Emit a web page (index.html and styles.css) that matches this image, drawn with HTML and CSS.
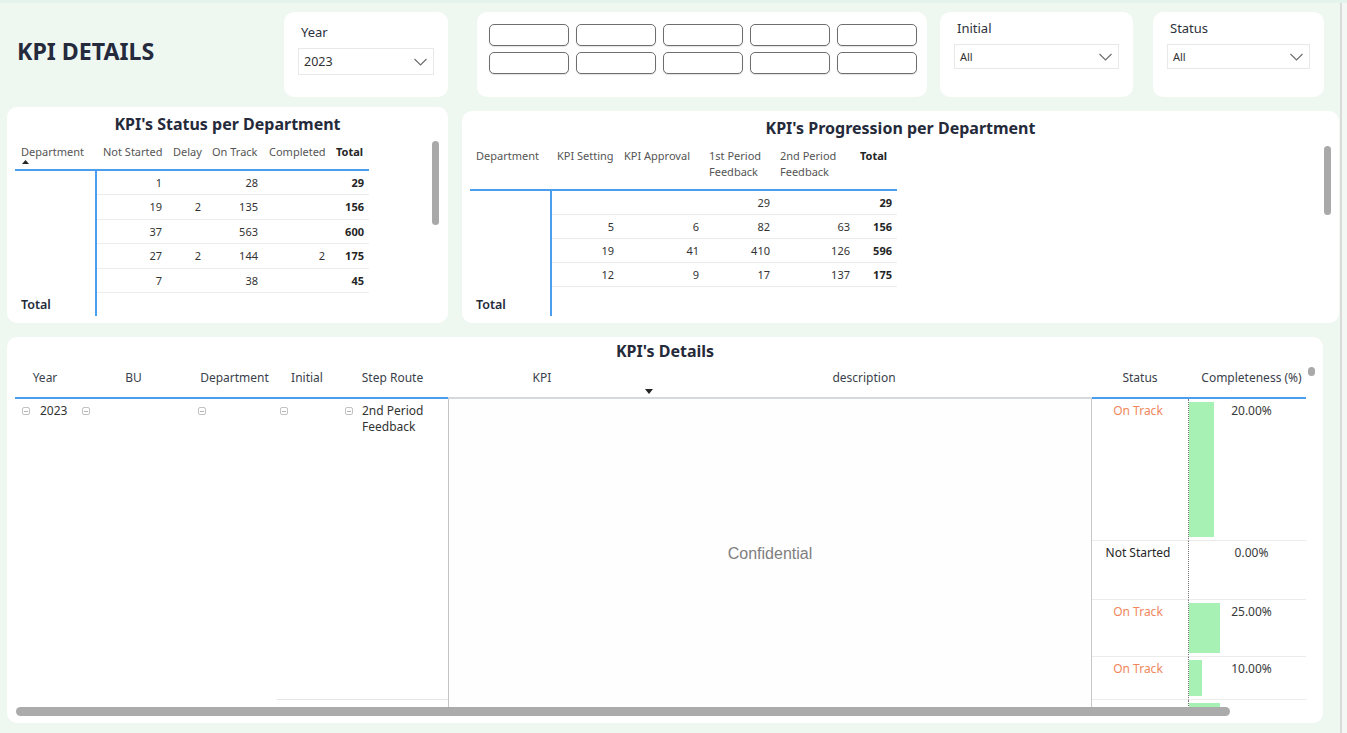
FILE: index.html
```html
<!DOCTYPE html>
<html lang="en">
<head>
<meta charset="utf-8">
<title>KPI Details</title>
<link rel="stylesheet" href="styles.css">
</head>
<body>
<div class="page">
  <main class="main">
    <header class="top">
      <h1 class="page-title">KPI DETAILS</h1>

      <section class="card slicer slicer-year">
        <div class="slicer-label">Year</div>
        <div class="dropdown dd-year">
          <span>2023</span>
          <svg class="chev" width="13" height="8" viewBox="0 0 13 8"><polyline points="0.5,1 6.5,7 12.5,1"/></svg>
        </div>
      </section>

      <section class="card btn-card">
        <div class="btn-grid">
          <button class="pill"></button><button class="pill"></button><button class="pill"></button><button class="pill"></button><button class="pill"></button>
          <button class="pill"></button><button class="pill"></button><button class="pill"></button><button class="pill"></button><button class="pill"></button>
        </div>
      </section>

      <section class="card slicer slicer-initial">
        <div class="slicer-label">Initial</div>
        <div class="dropdown dd-small dd-initial">
          <span>All</span>
          <svg class="chev" width="13" height="8" viewBox="0 0 13 8"><polyline points="0.5,1 6.5,7 12.5,1"/></svg>
        </div>
      </section>

      <section class="card slicer slicer-status">
        <div class="slicer-label">Status</div>
        <div class="dropdown dd-small dd-status">
          <span>All</span>
          <svg class="chev" width="13" height="8" viewBox="0 0 13 8"><polyline points="0.5,1 6.5,7 12.5,1"/></svg>
        </div>
      </section>
    </header>

    <div class="mid">
      <section class="card visual status-card">
        <h2 class="visual-title">KPI's Status per Department</h2>
        <div class="mx mx-status">
          <div class="hc hc-dept">Department<svg class="sort-up" width="7" height="4" viewBox="0 0 7 4"><path d="M0 4 L3.5 0 L7 4 Z"/></svg></div>
          <div class="hc">Not Started</div>
          <div class="hc">Delay</div>
          <div class="hc">On Track</div>
          <div class="hc">Completed</div>
          <div class="hc bold">Total</div>

          <div class="dc"></div><div class="nc">1</div><div class="nc"></div><div class="nc">28</div><div class="nc"></div><div class="nc bold">29</div>
          <div class="dc"></div><div class="nc">19</div><div class="nc">2</div><div class="nc">135</div><div class="nc"></div><div class="nc bold">156</div>
          <div class="dc"></div><div class="nc">37</div><div class="nc"></div><div class="nc">563</div><div class="nc"></div><div class="nc bold">600</div>
          <div class="dc"></div><div class="nc">27</div><div class="nc">2</div><div class="nc">144</div><div class="nc">2</div><div class="nc bold">175</div>
          <div class="dc"></div><div class="nc">7</div><div class="nc"></div><div class="nc">38</div><div class="nc"></div><div class="nc bold">45</div>

          <div class="tl">Total</div><div></div><div></div><div></div><div></div><div></div>
        </div>
        <div class="vscroll vs-status"></div>
      </section>

      <section class="card visual prog-card">
        <h2 class="visual-title">KPI's Progression per Department</h2>
        <div class="mx mx-prog">
          <div class="hc hc-dept">Department</div>
          <div class="hc">KPI Setting</div>
          <div class="hc">KPI Approval</div>
          <div class="hc">1st Period<br>Feedback</div>
          <div class="hc">2nd Period<br>Feedback</div>
          <div class="hc bold">Total</div>

          <div class="dc"></div><div class="nc"></div><div class="nc"></div><div class="nc">29</div><div class="nc"></div><div class="nc bold">29</div>
          <div class="dc"></div><div class="nc">5</div><div class="nc">6</div><div class="nc">82</div><div class="nc">63</div><div class="nc bold">156</div>
          <div class="dc"></div><div class="nc">19</div><div class="nc">41</div><div class="nc">410</div><div class="nc">126</div><div class="nc bold">596</div>
          <div class="dc"></div><div class="nc">12</div><div class="nc">9</div><div class="nc">17</div><div class="nc">137</div><div class="nc bold">175</div>

          <div class="tl tl-prog">Total</div><div></div><div></div><div></div><div></div><div></div>
        </div>
        <div class="vscroll vs-prog"></div>
      </section>
    </div>

    <section class="card details">
      <h2 class="visual-title">KPI's Details</h2>
      <div class="dt-head">
        <div class="dh">Year</div>
        <div class="dh">BU</div>
        <div class="dh">Department</div>
        <div class="dh">Initial</div>
        <div class="dh">Step Route</div>
        <div class="dh gray">KPI</div>
        <div class="dh gray">description<span class="sort-line"><svg class="sort-down" width="8" height="5" viewBox="0 0 8 5"><path d="M0 0 L8 0 L4 5 Z"/></svg></span></div>
        <div class="dh">Status</div>
        <div class="dh dh-comp">Completeness (%)</div>
      </div>
      <div class="dt-body">
        <div class="grp-left">
          <div class="lc lc-year"><span class="tog"></span><span class="lc-text">2023</span></div>
          <div class="lc lc-bu"><span class="tog"></span></div>
          <div class="lc lc-dept"><span class="tog"></span></div>
          <div class="lc lc-init sep"><span class="tog"></span></div>
          <div class="lc lc-step sep"><span class="tog"></span><span class="lc-text">2nd Period<br>Feedback</span></div>

          <div class="lc"></div>
          <div class="lc"></div>
          <div class="lc"></div>
          <div class="lc lc-init"><span class="tog"></span></div>
          <div class="lc lc-step"><span class="tog"></span></div>
        </div>

        <div class="conf">Confidential</div>

        <div class="grp-right">
          <div class="sc on">On Track</div>
          <div class="cc"><span class="bar" style="--pct:20"></span><span class="pct">20.00%</span></div>
          <div class="sc">Not Started</div>
          <div class="cc"><span class="bar" style="--pct:0"></span><span class="pct">0.00%</span></div>
          <div class="sc on">On Track</div>
          <div class="cc"><span class="bar" style="--pct:25"></span><span class="pct">25.00%</span></div>
          <div class="sc on">On Track</div>
          <div class="cc"><span class="bar" style="--pct:10"></span><span class="pct">10.00%</span></div>
          <div class="sc"></div>
          <div class="cc"><span class="bar" style="--pct:25"></span><span class="pct"></span></div>
        </div>
      </div>
      <div class="hscroll"></div>
      <div class="vscroll vs-details"></div>
    </section>
  </main>
  <div class="page-track"></div>
</div>
</body>
</html>
```

FILE: styles.css
```css
* {
  box-sizing: border-box;
  margin: 0;
  padding: 0;
}

html, body {
  width: 1347px;
  height: 733px;
  overflow: hidden;
}

body {
  background: #eff7f1;
  font-family: "Noto Sans", "Open Sans", sans-serif;
  color: #333;
}

.page {
  display: flex;
  width: 1347px;
  height: 733px;
  border-top: 3px solid #e4f4ec;
  background: #eff7f1;
}

.main {
  width: 1340px;
  flex: none;
  display: flex;
  flex-direction: column;
}

.page-track {
  flex: 1;
  border-left: 2px solid #dadada;
  background: #f4f8f5;
}

.card {
  background: #fff;
  border-radius: 10px;
}

/* ---------- top row ---------- */
.top {
  display: flex;
  align-items: flex-start;
  margin-top: 9px;
  height: 85px;
}

.page-title {
  width: 284px;
  flex: none;
  padding-left: 17px;
  margin-top: 23px;
  font-size: 23.2px;
  line-height: 32px;
  font-weight: 700;
  color: #252a3d;
}

.slicer {
  height: 85px;
  flex: none;
  padding: 7px 14px 0;
}

.slicer-year {
  width: 164px;
  padding-top: 11px;
}

.slicer-initial {
  width: 193px;
  margin-left: 13px;
}

.slicer-status {
  width: 171px;
  margin-left: 20px;
}

.slicer-label {
  font-size: 13px;
  line-height: 18px;
  padding-left: 3px;
  color: #2c313c;
}

.dropdown {
  display: flex;
  align-items: center;
  justify-content: space-between;
  border: 1px solid #e8e8e8;
  margin-top: 7px;
  padding: 0 6px 0 5px;
  color: #333;
}

.dd-year {
  width: 136px;
  height: 27px;
  font-size: 12.5px;
  padding-right: 6px;
}

.dd-small {
  height: 25px;
  font-size: 11px;
}

.dd-initial { width: 165px; }
.dd-status { width: 143px; }

.chev polyline {
  fill: none;
  stroke: #6b6b6b;
  stroke-width: 1.1;
}

.btn-card {
  width: 450px;
  height: 85px;
  flex: none;
  margin-left: 29px;
  padding: 12px 0 0 12px;
}

.btn-grid {
  display: grid;
  grid-template-columns: repeat(5, 80px);
  grid-template-rows: 22px 22px;
  column-gap: 7px;
  row-gap: 6px;
}

.pill {
  background: #fff;
  border: 1px solid #6e6e6e;
  border-radius: 5px;
  box-shadow: 0 1px 1px rgba(0, 0, 0, 0.12);
}

/* ---------- middle row ---------- */
.mid {
  display: flex;
  align-items: flex-end;
  margin-top: 10px;
  height: 216px;
}

.visual {
  position: relative;
  padding: 6px 8px 0;
  flex: none;
}

.status-card {
  width: 441px;
  height: 216px;
  margin-left: 7px;
}

.prog-card {
  width: 877px;
  height: 212px;
  margin-left: 14px;
}

.visual-title {
  text-align: center;
  font-size: 16px;
  line-height: 22px;
  font-weight: 700;
  color: #252a3b;
}

.mx {
  display: grid;
}

.mx-status {
  grid-template-columns: 82px 70px 39px 57px 67px 39px;
  grid-template-rows: 36px repeat(5, 24.4px) 23px;
}

.mx-prog {
  grid-template-columns: 82px 67px 85px 71px 80px 42px;
  grid-template-rows: 52px repeat(4, 24px) 29px;
}

.hc {
  border-bottom: 2px solid #4a9eed;
  padding: 10px 0 0 6px;
  font-size: 11px;
  line-height: 14px;
  color: #555;
  white-space: nowrap;
}

.mx-prog .hc {
  padding: 9px 0 0 5px;
  line-height: 16px;
}

.mx-prog .hc-dept {
  padding-left: 6px;
}

.hc.bold {
  color: #252525;
}

.sort-up {
  display: block;
  margin: 1px 0 0 1px;
}

.sort-up path,
.sort-down path {
  fill: #252525;
}

.bold {
  font-weight: 700;
}

.dc {
  border-right: 2px solid #4a9eed;
}

.nc {
  text-align: right;
  padding-right: 5px;
  font-size: 11px;
  line-height: 23px;
  border-bottom: 1px solid #ececec;
  color: #333;
}

.nc.bold {
  color: #252525;
}

.tl {
  border-right: 2px solid #4a9eed;
  padding: 3px 0 0 6px;
  font-size: 12.5px;
  line-height: 18px;
  font-weight: 600;
  color: #252a3b;
}

.tl-prog {
  padding-top: 9px;
}

.vscroll {
  position: absolute;
  width: 7px;
  background: #a9a9a9;
  border-radius: 4px;
}

.vs-status {
  left: 425px;
  top: 34px;
  height: 84px;
}

.vs-prog {
  left: 862px;
  top: 35px;
  height: 69px;
}

/* ---------- details ---------- */
.details {
  position: relative;
  width: 1316px;
  height: 386px;
  margin: 14px 0 0 7px;
  padding: 3px 8px 7px;
}

.dt-head {
  display: grid;
  grid-template-columns: 60px 117px 85px 60px 111px 188px 456px 96px 118px;
  height: 37px;
}

.dh {
  border-bottom: 2px solid #4a9eed;
  padding-top: 8px;
  font-size: 12px;
  line-height: 16px;
  text-align: center;
  color: #3a3f4b;
  white-space: nowrap;
}

.dh.gray {
  border-bottom-color: #d6d9dc;
}

.dh-comp {
  padding-left: 9px;
}

.sort-line {
  display: block;
  text-align: left;
  padding-left: 9px;
  line-height: 5px;
  margin-top: 1px;
}

.dt-body {
  display: grid;
  grid-template-columns: 433px 644px 214px;
  align-items: start;
  height: 308px;
  overflow: hidden;
}

.grp-left {
  display: grid;
  grid-template-columns: 60px 117px 85px 60px 111px;
  grid-template-rows: 301px 20px;
}

.lc {
  display: flex;
  align-items: flex-start;
  padding-top: 4px;
  font-size: 12px;
  line-height: 16px;
  color: #333;
}

.lc.sep {
  border-bottom: 1px solid #e6e6e6;
}

.lc-year { padding-left: 7px; }
.lc-bu { padding-left: 7px; }
.lc-dept { padding-left: 6px; }
.lc-init { padding-left: 3px; }
.lc-step { padding-left: 8px; }

.lc-year .lc-text { margin-left: 10px; }
.lc-step .lc-text { margin-left: 9px; }

.tog {
  position: relative;
  flex: none;
  width: 8px;
  height: 8px;
  margin-top: 4px;
  border: 1px solid #c2c2c2;
  border-radius: 2px;
}

.tog::before {
  content: "";
  position: absolute;
  left: 1px;
  right: 1px;
  top: 2.5px;
  height: 1px;
  background: #b5b5b5;
}

.conf {
  height: 311px;
  border-left: 1px solid #c4c4c4;
  border-right: 1px solid #c8c8c8;
  border-bottom: 1px solid #c4c4c4;
  background: #fefefe;
  display: flex;
  align-items: center;
  justify-content: center;
  font-family: "Liberation Sans", Arial, sans-serif;
  font-size: 16px;
  color: #7f7f7f;
}

.grp-right {
  display: grid;
  grid-template-columns: 96px 118px;
  grid-template-rows: 142px 59px 57px 43px 20px;
}

.sc {
  border-bottom: 1px solid #ececec;
  text-align: center;
  padding: 4px 4px 0 0;
  font-size: 12px;
  line-height: 16px;
  color: #252525;
}

.sc.on {
  color: #f0875c;
}

.cc {
  display: grid;
  border-left: 1px dotted #7a7a7a;
  border-bottom: 1px solid #ececec;
}

.bar {
  grid-area: 1 / 1;
  justify-self: start;
  align-self: stretch;
  margin: 3px 0;
  width: calc(var(--pct) * 1.25px);
  background: #a8f1b4;
}

.pct {
  grid-area: 1 / 1;
  justify-self: center;
  align-self: start;
  padding: 4px 0 0 8px;
  font-size: 12px;
  line-height: 16px;
  color: #3a3a3a;
}

.hscroll {
  width: 1214px;
  height: 9px;
  margin-left: 1px;
  background: #ababab;
  border-radius: 5px;
}

.vs-details {
  left: 1301px;
  top: 30px;
  height: 9px;
}
```
